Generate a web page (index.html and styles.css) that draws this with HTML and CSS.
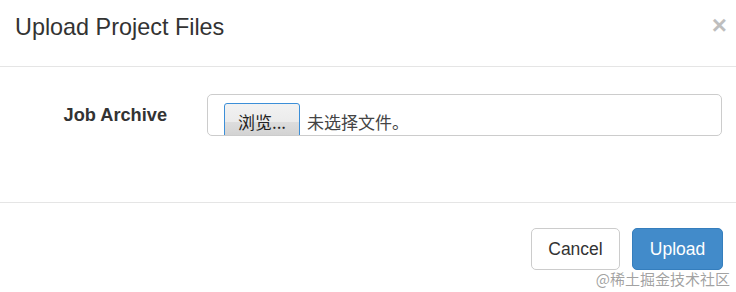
FILE: index.html
```html
<!DOCTYPE html>
<html lang="zh-CN">
<head>
    <meta charset="UTF-8">
    <title>Upload Project Files</title>
    <link rel="stylesheet" href="styles.css">
</head>
<body>
    <div class="modal">
        <div class="modal-header">
            <h4 class="modal-title">Upload Project Files</h4>
            <button class="close">&times;</button>
        </div>

        <div class="modal-body">
            <div class="form-row">
                <label class="form-label">Job Archive</label>
                <div class="file-input">
                    <span class="file-btn">浏览...</span>
                    <span class="file-name">未选择文件。</span>
                </div>
            </div>
        </div>

        <div class="modal-footer">
            <button class="btn btn-default">Cancel</button>
            <button class="btn btn-primary">Upload</button>
        </div>

        <div class="watermark">@稀土掘金技术社区</div>
    </div>
</body>
</html>
```

FILE: styles.css
```css
* {
    margin: 0;
    padding: 0;
    box-sizing: border-box;
}

body {
    font-family: "Liberation Sans", Arial, "Noto Sans CJK SC", sans-serif;
    color: #333;
    background: #fff;
}

.modal {
    position: relative;
    width: 736px;
    height: 292px;
    overflow: hidden;
}

.modal-header {
    display: flex;
    justify-content: space-between;
    align-items: flex-start;
    padding: 12px 9px 23px 15px;
    border-bottom: 1px solid #e5e5e5;
}

.modal-title {
    font-size: 23.4px;
    font-weight: normal;
    line-height: 31px;
}

.close {
    background: none;
    border: none;
    font-family: "Liberation Sans", Arial, sans-serif;
    font-size: 26px;
    font-weight: bold;
    line-height: 26px;
    color: #000;
    opacity: 0.25;
    cursor: pointer;
}

.modal-body {
    padding: 27px 14px 66px 0;
}

.form-row {
    display: flex;
    align-items: center;
}

.form-label {
    width: 167px;
    margin-right: 40px;
    text-align: right;
    font-size: 18.2px;
    font-weight: bold;
}

.file-input {
    flex: 1;
    height: 42px;
    display: flex;
    align-items: flex-start;
    gap: 7px;
    padding: 8px 16px 0;
    border: 1px solid #ccc;
    border-radius: 5px;
    overflow: hidden;
    font-family: "Noto Sans CJK SC", sans-serif;
    font-size: 17px;
}

.file-btn {
    display: block;
    width: 76px;
    height: 38px;
    padding-top: 5px;
    text-align: center;
    color: #222;
    border: 1px solid #3c8fd8;
    border-radius: 3px;
    background: linear-gradient(#f2f2f2 0%, #ebebeb 50%, #dddddd 51%, #cfcfcf 100%);
}

.file-name {
    padding-top: 6px;
    color: #444;
}

.modal-footer {
    display: flex;
    justify-content: flex-end;
    gap: 12px;
    padding: 25px 13px 0;
    border-top: 1px solid #e5e5e5;
}

.btn {
    height: 42px;
    padding: 0 16px;
    font-family: "Liberation Sans", Arial, sans-serif;
    font-size: 17.5px;
    border-radius: 5px;
    border: 1px solid transparent;
    cursor: pointer;
}

.btn-default {
    width: 89px;
    background: #fff;
    color: #333;
    border-color: #ccc;
}

.btn-primary {
    width: 91px;
    background: #428bca;
    color: #fff;
    border-color: #357ebd;
}

.watermark {
    position: absolute;
    right: 6px;
    bottom: 4px;
    font-family: "Noto Sans CJK SC", sans-serif;
    font-size: 15px;
    line-height: 18px;
    color: rgba(120, 120, 120, 0.7);
}
```
